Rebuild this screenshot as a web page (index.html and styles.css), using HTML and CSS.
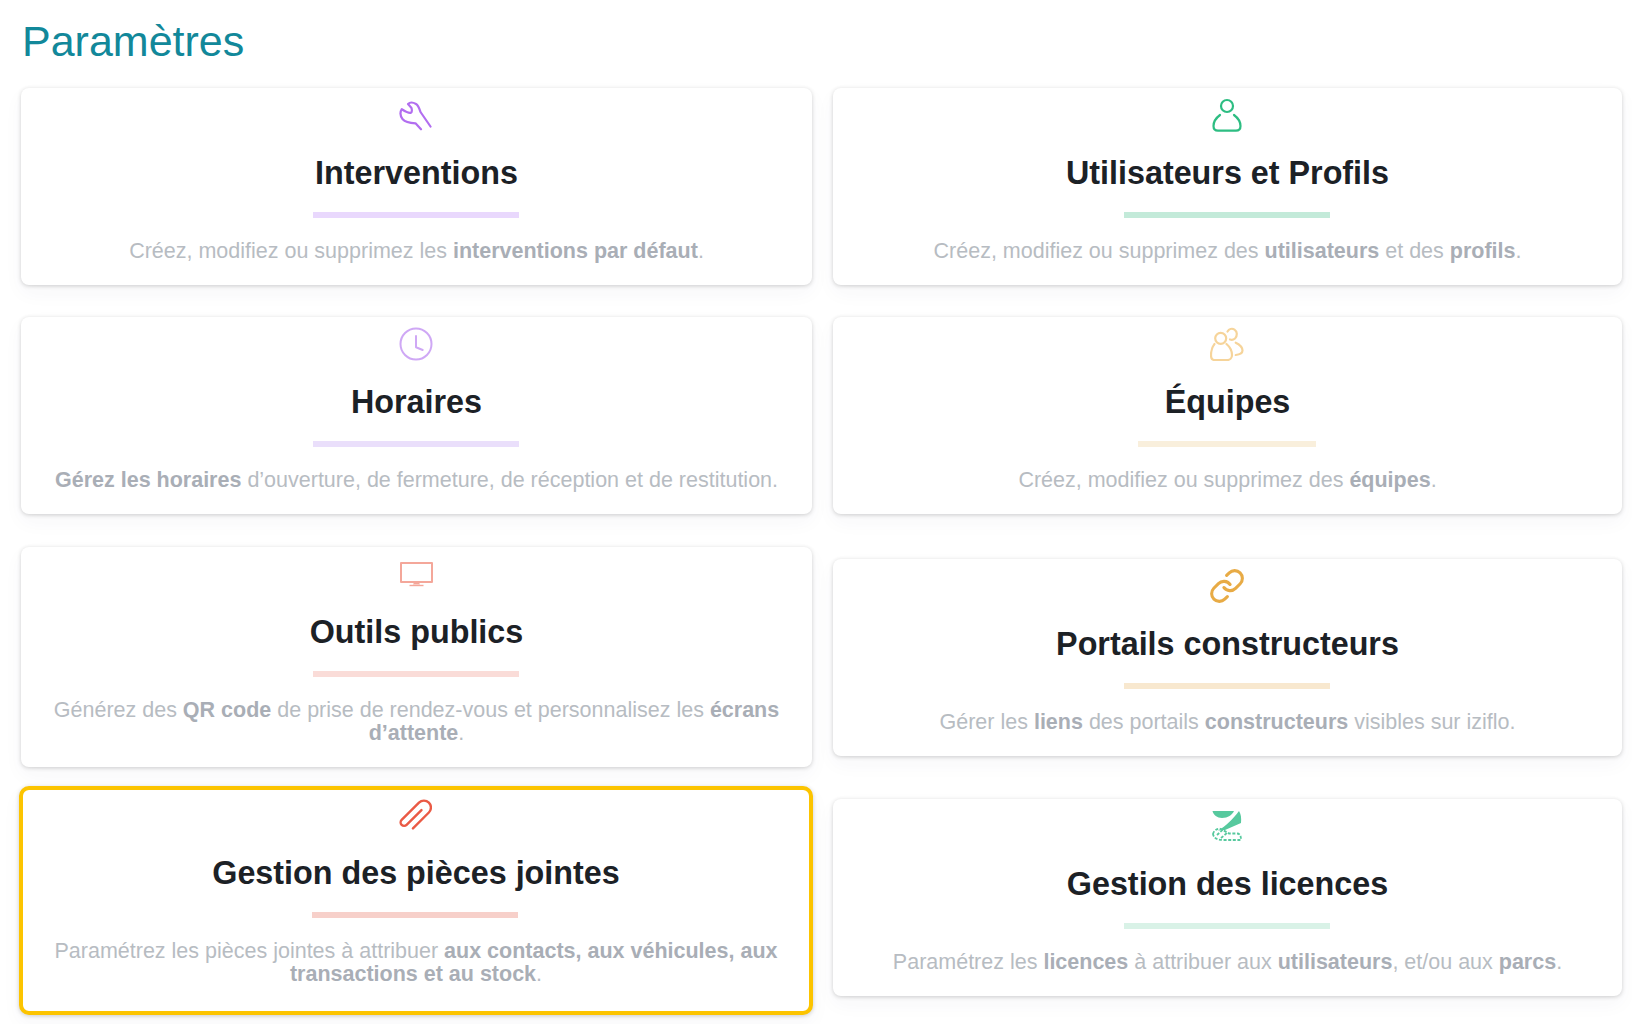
FILE: index.html
```html
<!DOCTYPE html>
<html lang="fr">
<head>
  <meta charset="UTF-8" />
  <meta name="viewport" content="width=device-width, initial-scale=1.0" />
  <title>Paramètres</title>
  <link rel="stylesheet" href="styles.css">
</head>
<body>
  <h1 class="page-title">Paramètres</h1>

  <div class="row">
    <div class="card">
      <svg class="card-icon" viewBox="0 0 34 34" fill="none" stroke="#b26ef0" stroke-width="2.2" stroke-linecap="round" stroke-linejoin="round">
        <path d="M31.5 28.5 L21.5 14 C20.5 11 19.5 7.5 17 6 C14.5 4.5 11 4 9 6 L12.5 10 C13 12 13 14 12 14.7 C10 15.5 8 14.5 2.8 11.2 C1 14 1.2 18 3.7 21.3 C6 24 10 25 16.5 25.3 L22 31.3"/>
      </svg>
      <h2 class="card-title">Interventions</h2>
      <div class="card-rule rule-violet"></div>
      <p class="card-text">Créez, modifiez ou supprimez les <b>interventions par défaut</b>.</p>
    </div>
    <div class="card">
      <svg class="card-icon" viewBox="0 0 34 34" fill="none" stroke="#2dbd82" stroke-width="2.2" stroke-linecap="round" stroke-linejoin="round">
        <circle cx="17" cy="8" r="6"/>
        <path d="M10 17 C6 20 3.5 24 3.5 28 C3.5 31 5 32.7 8 32.7 H26 C29 32.7 30.5 31 30.5 28 C30.5 24 28 20 24 17"/>
      </svg>
      <h2 class="card-title">Utilisateurs et Profils</h2>
      <div class="card-rule rule-green"></div>
      <p class="card-text">Créez, modifiez ou supprimez des <b>utilisateurs</b> et des <b>profils</b>.</p>
    </div>
  </div>

  <div class="row">
    <div class="card">
      <svg class="card-icon" viewBox="0 0 34 34" fill="none" stroke="#cfa8f5" stroke-width="2" stroke-linecap="round" stroke-linejoin="round">
        <circle cx="17" cy="17" r="15.5"/>
        <path d="M17 9 V20.3 L23.7 23"/>
      </svg>
      <h2 class="card-title">Horaires</h2>
      <div class="card-rule rule-lilac"></div>
      <p class="card-text"><b>Gérez les horaires</b> d’ouverture, de fermeture, de réception et de restitution.</p>
    </div>
    <div class="card">
      <svg class="card-icon" viewBox="0 0 34 34" fill="none" stroke="#f6d49a" stroke-width="2.2" stroke-linecap="round" stroke-linejoin="round">
        <circle cx="10.7" cy="11.3" r="5.5"/>
        <path d="M4.5 17 C2 20 1 24 1 28 C1 31 2 33 4.5 33 H17.5 C20 33 22 31 22 28 C22 24 20 20 16.5 17"/>
        <path d="M17.5 4.5 C19 2 22 1.2 24.5 2.6 C27.5 4.5 27.5 9 25 11.5 C23.5 12.8 21.5 13 20 12.5"/>
        <path d="M25.7 15.7 C29.5 17.5 32.5 20 32.5 23.5 C32.5 26 29.5 27.5 25.7 28"/>
      </svg>
      <h2 class="card-title">Équipes</h2>
      <div class="card-rule card-rule--short rule-sand"></div>
      <p class="card-text">Créez, modifiez ou supprimez des <b>équipes</b>.</p>
    </div>
  </div>

  <div class="row row--tools">
    <div class="card">
      <svg class="card-icon" viewBox="0 0 34 34" fill="none" stroke="#f4a79a" stroke-width="2" stroke-linejoin="round">
        <rect x="2" y="6" width="31" height="19"/>
        <path d="M15 25.5 H20 L21 27.5 H14 Z" fill="#f4a79a" stroke="none"/>
        <path d="M10.5 28.5 H24.5" stroke-width="1.4"/>
      </svg>
      <h2 class="card-title">Outils publics</h2>
      <div class="card-rule rule-rose"></div>
      <p class="card-text">Générez des <b>QR code</b> de prise de rendez-vous et personnalisez les <b>écrans d’attente</b>.</p>
    </div>
    <div class="card">
      <svg class="card-icon" viewBox="1 1 22 22" fill="none" stroke="#e8ab45" stroke-width="2" stroke-linecap="round" stroke-linejoin="round">
        <path d="M10 13a5 5 0 0 0 7.54.54l3-3a5 5 0 0 0-7.07-7.07l-1.72 1.71"/>
        <path d="M14 11a5 5 0 0 0-7.54-.54l-3 3a5 5 0 0 0 7.07 7.07l1.71-1.71"/>
      </svg>
      <h2 class="card-title">Portails constructeurs</h2>
      <div class="card-rule rule-wheat"></div>
      <p class="card-text">Gérer les <b>liens</b> des portails <b>constructeurs</b> visibles sur iziflo.</p>
    </div>
  </div>

  <div class="row">
    <div class="card card--selected">
      <svg class="card-icon" viewBox="0 0 34 34" fill="none" stroke="#ea5a45" stroke-width="2.4" stroke-linecap="round" stroke-linejoin="round">
        <g transform="translate(1.5 2) rotate(45 17 15)">
          <path d="M24 27 V4.5 a7 7 0 0 0 -14 0 V29 a3.5 3.5 0 0 0 7 0 V8"/>
        </g>
      </svg>
      <h2 class="card-title">Gestion des pièces jointes</h2>
      <div class="card-rule rule-coral"></div>
      <p class="card-text">Paramétrez les pièces jointes à attribuer <b>aux contacts, aux véhicules, aux transactions et au stock</b>.</p>
    </div>
    <div class="card">
      <svg class="card-icon" viewBox="0 0 34 34" fill="none">
        <path d="M2.5 2 H24 C22 6 18 9 12 9 C7 9 3.5 6 2.5 2 Z" fill="#57c99e"/>
        <path d="M29 2 C31 5 31.5 9 31 14 L15 21 L8 21.5 C16 17 23 10 29 2 Z" fill="#57c99e"/>
        <g stroke="#57c99e" stroke-width="1.8" stroke-dasharray="3 1.6">
          <path d="M3 25 C4 21 8 19 11 20 L19 24.5 H27 C30 24.5 31 27 31 31 H14 C8 31 4 30 3 25 Z"/>
          <path d="M7 26 L13 20.5 M11 29 L17 24"/>
        </g>
      </svg>
      <h2 class="card-title">Gestion des licences</h2>
      <div class="card-rule rule-mint"></div>
      <p class="card-text">Paramétrez les <b>licences</b> à attribuer aux <b>utilisateurs</b>, et/ou aux <b>parcs</b>.</p>
    </div>
  </div>
</body>
</html>
```

FILE: styles.css
```css
:root {
  --teal: #12889a;
  --title: #1c2126;
  --text: #b7bcc2;
  --text-strong: #a9aeb6;
  --selected: #fcc400;
}

body {
  margin: 0;
  padding: 0 10px 12px 21px;
  background-color: #fff;
  font-family: "Liberation Sans", Arial, sans-serif;
}

.page-title {
  margin: 0 0 7px;
  padding: 17px 0 0 1px;
  font-size: 43px;
  line-height: 48px;
  font-weight: 400;
  color: var(--teal);
}

.row {
  display: grid;
  grid-template-columns: 791px 789px;
  column-gap: 21px;
  align-items: center;
}

.row--tools {
  margin-top: 1px;
}

.card {
  margin: 16px 0;
  padding: 10px 28px 22px;
  background: #fff;
  border-radius: 8px;
  box-shadow: 0 1px 4px rgba(0,0,0,0.18), 0 8px 20px rgba(40,60,110,0.04);
  text-align: center;
}

.card--selected {
  margin: 2px -1px -3px -2px;
  padding: 8px 28px 25px;
  border: 4px solid var(--selected);
  border-radius: 10px;
}

.card-icon {
  display: block;
  width: 34px;
  height: 34px;
  margin: 0 auto;
  transform: translateX(-1px);
}

.card-title {
  margin: 23px 0 0;
  font-size: 32.3px;
  line-height: 36px;
  font-weight: 700;
  color: var(--title);
}

.card-rule {
  width: 206px;
  height: 6px;
  margin: 21px auto 22px;
  transform: translateX(-1px);
}

.card-rule--short {
  width: 178px;
}

.rule-violet { background: #e9d8fd; }
.rule-green { background: #c3ead9; }
.rule-lilac { background: #eadffb; }
.rule-sand { background: #f9efdc; }
.rule-rose { background: #fadcd8; }
.rule-wheat { background: #f8e8cf; }
.rule-coral { background: #f7d0ca; }
.rule-mint { background: #d9f2e7; }

.card-text {
  margin: 0;
  font-size: 21.5px;
  line-height: 23px;
  color: var(--text);
}

.card-text b {
  color: var(--text-strong);
}
```
